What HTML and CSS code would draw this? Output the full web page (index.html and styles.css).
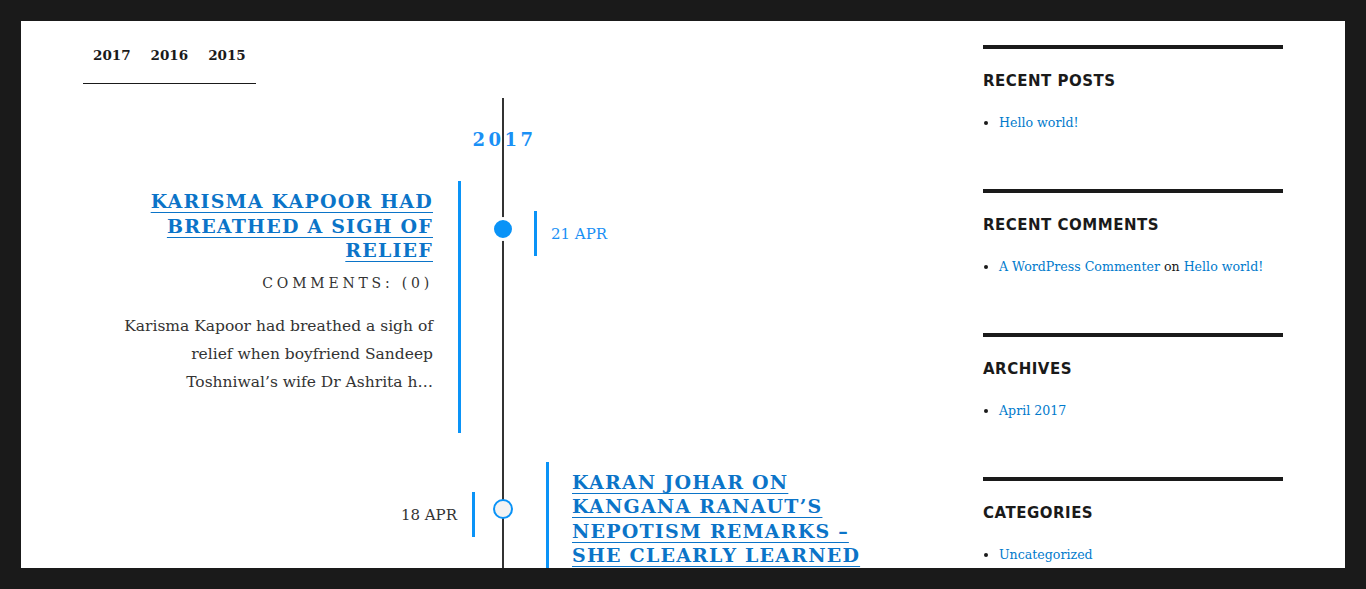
FILE: index.html
```html
<!DOCTYPE html>
<html lang="en">
<head>
<meta charset="utf-8">
<title>Timeline</title>
<link rel="stylesheet" href="styles.css">
</head>
<body>
<div class="site">
  <div class="content">
    <main class="main">
      <ul class="year-tabs">
        <li class="year-tab">2017</li>
        <li class="year-tab">2016</li>
        <li class="year-tab">2015</li>
      </ul>
      <section class="timeline">
        <h2 class="tl-year">2017</h2>
        <article class="tl-row tl-row--left">
          <div class="tl-post">
            <h3 class="tl-title"><a href="#">Karisma Kapoor had breathed a sigh of relief</a></h3>
            <p class="tl-comments">Comments: (0)</p>
            <p class="tl-excerpt">Karisma Kapoor had breathed a sigh of relief when boyfriend Sandeep Toshniwal’s wife Dr Ashrita h…</p>
          </div>
          <span class="tl-dot tl-dot--filled"></span>
          <div class="tl-date">21 APR</div>
        </article>
        <article class="tl-row tl-row--right">
          <div class="tl-date">18 APR</div>
          <span class="tl-dot tl-dot--hollow"></span>
          <div class="tl-post">
            <h3 class="tl-title"><a href="#">Karan Johar on Kangana Ranaut’s nepotism remarks – she clearly learned</a></h3>
            <p class="tl-comments">Comments: (0)</p>
            <p class="tl-excerpt">Karan Johar has finally responded to Kangana Ranaut’s nepotism remarks on his show…</p>
          </div>
        </article>
      </section>
    </main>
    <aside class="sidebar">
      <section class="widget">
        <h2 class="widget-title">Recent Posts</h2>
        <ul class="widget-list">
          <li><a href="#">Hello world!</a></li>
        </ul>
      </section>
      <section class="widget">
        <h2 class="widget-title">Recent Comments</h2>
        <ul class="widget-list">
          <li><a href="#">A WordPress Commenter</a> on <a href="#">Hello world!</a></li>
        </ul>
      </section>
      <section class="widget">
        <h2 class="widget-title">Archives</h2>
        <ul class="widget-list">
          <li><a href="#">April 2017</a></li>
        </ul>
      </section>
      <section class="widget">
        <h2 class="widget-title">Categories</h2>
        <ul class="widget-list">
          <li><a href="#">Uncategorized</a></li>
        </ul>
      </section>
    </aside>
  </div>
</div>
</body>
</html>
```

FILE: styles.css
```css
* { box-sizing: border-box; }

html, body {
  margin: 0;
  height: 100%;
}

body {
  background: #1a1a1a;
  padding: 21px;
  overflow: hidden;
  font-family: "DejaVu Serif", "Liberation Serif", serif;
  color: #1a1a1a;
}

.site {
  background: #fff;
  height: 100%;
  overflow: hidden;
}

.content {
  display: flex;
  gap: 60px;
  padding: 0 62px;
}

.main {
  width: 840px;
  flex: none;
}

/* Year tabs */
.year-tabs {
  display: inline-flex;
  list-style: none;
  margin: 24px 0 0;
  padding: 0 0 18px;
  border-bottom: 1px solid #1a1a1a;
}

.year-tab {
  padding: 0 10px;
  font-size: 13.5px;
  line-height: 20px;
  font-weight: 700;
  color: #1a1a1a;
}

/* Timeline */
.timeline {
  margin-top: 14px;
  padding-top: 30px;
  display: flex;
  flex-direction: column;
  gap: 29px;
  background: linear-gradient(#333, #333) no-repeat center top / 2px 100%;
  min-height: 600px;
}

.tl-year {
  margin: 0;
  text-align: center;
  font-size: 18px;
  line-height: 24px;
  font-weight: 700;
  letter-spacing: 3.5px;
  padding-left: 3px;
  color: #1a90f5;
}

.tl-row {
  position: relative;
  display: grid;
  grid-template-columns: 1fr 1fr;
  align-items: start;
}

.tl-post {
  width: 378px;
  padding: 8px 25px 37px;
}

.tl-title {
  margin: 0;
  font-size: 19px;
  line-height: 24.5px;
  font-weight: 700;
  text-transform: uppercase;
  letter-spacing: 1.2px;
}

.tl-title a {
  color: #0b74c8;
  text-decoration: underline;
  text-decoration-thickness: 1px;
  text-underline-offset: 4px;
}

.tl-comments {
  margin: 8px 0 0;
  font-size: 14px;
  line-height: 24px;
  letter-spacing: 3.8px;
  text-transform: uppercase;
  color: #333;
}

.tl-excerpt {
  margin: 17px 0 0;
  font-size: 15.5px;
  line-height: 28px;
  color: #333;
}

.tl-date {
  margin-top: 30px;
  font-size: 15px;
  line-height: 43px;
  padding-top: 2px;
}

.tl-dot {
  position: absolute;
  left: 50%;
  top: 36px;
  width: 24px;
  height: 24px;
  margin-left: -12px;
  border-radius: 50%;
  border: 3px solid #fff;
}

.tl-dot--filled {
  background: #0a93f7;
}

.tl-dot--hollow {
  background: #f3f3f3;
  border: 2px solid #0a93f7;
  width: 20px;
  height: 20px;
  margin-left: -10px;
  top: 37px;
}

/* Left-side post */
.tl-row--left .tl-post {
  justify-self: start;
  text-align: right;
  border-right: 3px solid #0a93f7;
}

.tl-row--left .tl-date {
  justify-self: start;
  margin-left: 31px;
  padding-left: 14px;
  border-left: 3px solid #0a93f7;
  color: #1a90f5;
}

/* Right-side post */
.tl-row--right .tl-date {
  justify-self: end;
  margin-right: 28px;
  padding-right: 15px;
  border-right: 3px solid #0a93f7;
  color: #333;
}

.tl-row--right .tl-post {
  justify-self: end;
  width: 377px;
  padding-left: 23px;
  border-left: 3px solid #0a93f7;
}

/* Sidebar */
.sidebar {
  width: 300px;
  flex: none;
  padding-top: 24px;
}

.widget {
  border-top: 4px solid #1a1a1a;
  padding-top: 22px;
  margin-bottom: 56px;
}

.widget-title {
  margin: 0 0 22px;
  font-family: "DejaVu Sans", "Liberation Sans", sans-serif;
  font-size: 15px;
  line-height: 20px;
  font-weight: 700;
  text-transform: uppercase;
  letter-spacing: 0.5px;
  color: #1a1a1a;
}

.widget-list {
  margin: 0;
  padding-left: 16px;
  font-size: 12.6px;
  line-height: 20px;
  color: #1a1a1a;
}

.widget-list a {
  color: #007acc;
  text-decoration: none;
}
```
